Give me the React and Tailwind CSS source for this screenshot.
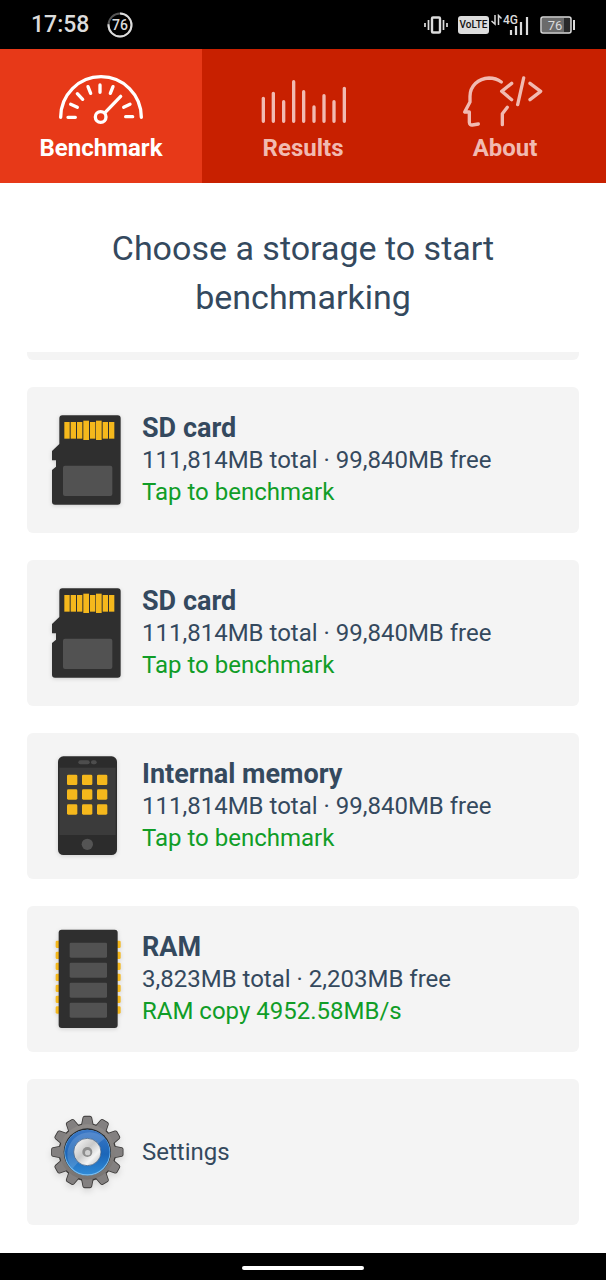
const tabs = [
  { name: 'Benchmark', icon: GaugeIcon, active: true },
  { name: 'Results', icon: BarsIcon, active: false },
  { name: 'About', icon: HeadIcon, active: false },
];

const storages = [
  { id: 'sd-1', name: 'SD card', space: '111,814MB total · 99,840MB free', action: 'Tap to benchmark', icon: SdCardIcon },
  { id: 'sd-2', name: 'SD card', space: '111,814MB total · 99,840MB free', action: 'Tap to benchmark', icon: SdCardIcon },
  { id: 'internal', name: 'Internal memory', space: '111,814MB total · 99,840MB free', action: 'Tap to benchmark', icon: PhoneIcon },
  { id: 'ram', name: 'RAM', space: '3,823MB total · 2,203MB free', action: 'RAM copy 4952.58MB/s', icon: RamIcon },
];

function GaugeIcon() {
  return (
    <svg viewBox="171 66 264 171" className="w-[88px] h-[57px]" fill="none" stroke="currentColor" strokeWidth="10" strokeLinecap="round" aria-hidden="true">
      <path d="M182 205 A121 122 0 0 1 424 205" />
      <path d="M204 205H226M212 166L232 175M232 134L248 151M264 113L272 133M300 108V130M339 113L331 133M371 175L390 166M377 203H398" />
      <path d="M362 142L315 191" />
      <circle cx="302" cy="204" r="16" />
    </svg>
  );
}

function BarsIcon() {
  return (
    <svg viewBox="171 66 264 171" className="w-[88px] h-[57px]" fill="none" stroke="currentColor" strokeWidth="10" strokeLinecap="round" aria-hidden="true">
      <path d="M184 148V217M214 133V217M245 158V217M275 98V217M305 128V217M336 174V217M366 140V217M396 158V217M427 118V217" />
    </svg>
  );
}

function HeadIcon() {
  return (
    <svg viewBox="171 66 264 171" className="w-[88px] h-[57px]" fill="none" stroke="currentColor" strokeWidth="10" strokeLinecap="round" strokeLinejoin="round" aria-hidden="true">
      <path d="M292 99C280 90 268 87 255 87C222 88 198 112 198 142V159L182 189H196V220Q197 229 205 228L223 225" />
      <path d="M310 175L295 194V227" />
      <path d="M323 103L293 127L323 152M359 87L341 167M378 103L410 127L378 152" />
    </svg>
  );
}

function SdCardIcon() {
  const pins = [133, 152, 171, 190, 210, 228, 248, 267];
  return (
    <svg viewBox="90 204 228 306" className="w-[76px] h-[102px] shrink-0 drop-shadow-sm" aria-hidden="true">
      <path d="M127 223H293Q302 223 302 232V482Q302 491 293 491H105Q96 491 96 482V387L108 377V358H96V330L118 309V232Q118 223 127 223Z" fill="#2f2f2f" />
      {pins.map((x) => {
        const tall = x === 190 || x === 228;
        return <rect key={x} x={x} y={tall ? 239 : 243} width={tall ? 17 : 16} height={tall ? 58 : 50} fill="#f5b81c" />;
      })}
      <rect x="129" y="374" width="148" height="91" rx="6" fill="#525252" />
    </svg>
  );
}

function PhoneIcon() {
  return (
    <svg viewBox="90 90 228 306" className="w-[76px] h-[102px] shrink-0 drop-shadow-sm" aria-hidden="true">
      <rect x="114" y="94" width="177" height="296" rx="16" fill="#2c2c2c" />
      <rect x="118" y="128" width="169" height="202" fill="#3b3b3b" />
      <rect x="175" y="106" width="34" height="12" rx="6" fill="#4d4d4d" />
      <rect x="213" y="106" width="17" height="12" rx="6" fill="#4d4d4d" />
      {[149, 193, 238].map((y) =>
        [141, 186, 231].map((x) => <rect key={`${x}-${y}`} x={x} y={y} width="31" height="31" rx="4" fill="#f5b81c" />)
      )}
      <circle cx="202" cy="358" r="17" fill="#545454" />
    </svg>
  );
}

function RamIcon() {
  return (
    <svg viewBox="90 85 228 306" className="w-[76px] h-[102px] shrink-0 drop-shadow-sm" aria-hidden="true">
      {[123, 156, 189, 222, 255, 288, 320].map((y) => (
        <rect key={y} x="107" y={y} width="195" height="22" rx="4" fill="#f5b81c" />
      ))}
      <rect x="116" y="90" width="177" height="295" rx="9" fill="#2f2f2f" />
      {[129, 189, 249, 309].map((y) => (
        <rect key={y} x="149" y={y} width="112" height="45" rx="4" fill="#525252" />
      ))}
    </svg>
  );
}

function GearIcon() {
  const teeth = Array.from({ length: 12 }, (_, i) => i * 30);
  const tooth = 'M124 86L130 55Q131 52 134 52H150Q153 52 154 55L160 86Z';
  return (
    <svg viewBox="30 5 228 306" className="w-[76px] h-[102px] shrink-0 drop-shadow-md" aria-hidden="true">
      <defs>
        <linearGradient id="gear-body" x1="0" y1="0" x2="0" y2="1">
          <stop offset="0" stopColor="#8f8b89" />
          <stop offset="1" stopColor="#777371" />
        </linearGradient>
        <linearGradient id="gear-blue" x1="0" y1="0" x2="0" y2="1">
          <stop offset="0" stopColor="#3c78c6" />
          <stop offset="0.55" stopColor="#1c66b8" />
          <stop offset="1" stopColor="#2f8ad6" />
        </linearGradient>
        <linearGradient id="gear-hub" x1="0" y1="0" x2="1" y2="1">
          <stop offset="0" stopColor="#ffffff" />
          <stop offset="0.45" stopColor="#c9c9c9" />
          <stop offset="0.7" stopColor="#f4f4f4" />
          <stop offset="1" stopColor="#b5b5b5" />
        </linearGradient>
      </defs>
      <g fill="#7f7b79" stroke="#3b3938" strokeWidth="5" strokeLinejoin="round">
        {teeth.map((a) => <path key={a} d={tooth} transform={`rotate(${a} 142 158)`} />)}
        <circle cx="142" cy="158" r="84" />
      </g>
      <g fill="#838080">
        {teeth.map((a) => <path key={a} d={tooth} transform={`rotate(${a} 142 158)`} />)}
      </g>
      <circle cx="142" cy="158" r="83" fill="url(#gear-body)" />
      <circle cx="142" cy="158" r="71" fill="#252a30" />
      <circle cx="142" cy="160" r="69" fill="#79bdf0" />
      <circle cx="142" cy="158" r="67" fill="url(#gear-blue)" />
      <path d="M97 208A67 67 0 0 1 195 117L142 158Z" fill="#ffffff" opacity="0.15" />
      <circle cx="142" cy="158" r="41" fill="url(#gear-hub)" stroke="#35557c" strokeWidth="2" />
      <circle cx="142" cy="158" r="15" fill="#8d8d8d" />
      <circle cx="143" cy="160" r="8" fill="#d0d0d0" />
    </svg>
  );
}

function StatusBar() {
  return (
    <header className="h-[49px] bg-black text-[#dcdcdc] flex items-center justify-between px-[31px]">
      <div className="flex items-center gap-[18px]">
        <span className="text-[23px] leading-[30px] font-medium">17:58</span>
        <svg viewBox="0 0 26 26" className="w-[26px] h-[26px]" aria-label="76">
          <circle cx="13" cy="13" r="11.5" fill="none" stroke="#555" strokeWidth="2" />
          <circle cx="13" cy="13" r="11.5" fill="none" stroke="#dcdcdc" strokeWidth="2" pathLength="100" strokeDasharray="76 24" transform="rotate(-90 13 13)" />
          <text x="13" y="18" textAnchor="middle" fontSize="14" fontWeight="500" fill="#dcdcdc">76</text>
        </svg>
      </div>
      <div className="flex items-center">
        <svg viewBox="0 0 24 18" className="w-[24px] h-[18px] mr-[10px]" fill="none" stroke="#dcdcdc" strokeWidth="2" aria-hidden="true">
          <rect x="8" y="1.5" width="8" height="15" rx="1" strokeWidth="2.4" />
          <path d="M1 7V11M4.500 4V14M19.500 4V14M23 7V11" strokeWidth="1.700" />
        </svg>
        <span className="w-[31px] h-[18px] mr-[2px] rounded-[3px] bg-[#dcdcdc] text-[#111] text-[10px] leading-[18px] font-medium text-center">VoLTE</span>
        <svg viewBox="0 0 38 22" className="w-[38px] h-[22px] mr-[11px]" fill="none" stroke="#dcdcdc" strokeWidth="1.500" aria-hidden="true">
          <path d="M4 1V10L0.500 7M7.500 11V1.500L10.500 4.500" />
          <path d="M20 16V21M25 12V21M30 8V21M36 3V21" strokeWidth="2.200" />
          <text x="12" y="10" fontSize="12" fontWeight="500" fill="#dcdcdc" stroke="none">4G</text>
        </svg>
        <svg viewBox="0 0 35 18" className="w-[35px] h-[18px]" aria-label="Battery 76">
          <rect x="1" y="1" width="30" height="16" rx="2" fill="#2a2a2a" stroke="#dcdcdc" strokeWidth="1.500" />
          <rect x="2" y="2" width="22" height="14" fill="#6b6b6b" />
          <rect x="33" y="4" width="2" height="10" fill="#dcdcdc" />
          <text x="15" y="14" textAnchor="middle" fontSize="13" fill="#dcdcdc">76</text>
        </svg>
      </div>
    </header>
  );
}

const cardClass = 'w-full min-h-[146px] flex items-center gap-4 pl-[23px] pr-4 rounded-[6px] bg-[#f4f4f4] text-left';

export default function App() {
  return (
    <div className="min-h-screen flex flex-col bg-white text-[#34495e] font-[Roboto,sans-serif]">
      <StatusBar />

      <nav className="grid grid-cols-3 bg-[#c82000]">
        {tabs.map(({ name, icon: Icon, active }) => (
          <button
            key={name}
            type="button"
            aria-current={active ? 'page' : undefined}
            className={`h-[134px] pt-[22px] flex flex-col items-center text-[24px] leading-[28px] font-bold ${
              active ? 'bg-[#e73918] text-white' : 'text-[#f1bab1]'
            }`}
          >
            <Icon />
            <span className="mt-[6px]">{name}</span>
          </button>
        ))}
      </nav>

      <main className="grow">
        <h1 className="h-[169px] pt-[41px] px-16 text-center text-[34px] leading-[49px]">
          Choose a storage to start benchmarking
        </h1>

        <div className="px-[27px] pb-[27px] flex flex-col gap-[27px]">
          {/* bottom edge of the card that is scrolled out */}
          <div className="h-[8px] rounded-b-[6px] bg-[#f4f4f4]" />

          {storages.map(({ id, name, space, action, icon: Icon }) => (
            <button key={id} type="button" className={cardClass}>
              <Icon />
              <span className="flex flex-col text-[24px] leading-[32px]">
                <span className="text-[27px] font-bold">{name}</span>
                <span>{space}</span>
                <span className="text-[#109d27]">{action}</span>
              </span>
            </button>
          ))}

          <button type="button" className={cardClass}>
            <GearIcon />
            <span className="text-[24px] leading-[32px]">Settings</span>
          </button>
        </div>
      </main>

      <footer className="h-[27px] bg-black flex items-center justify-center pt-[3px]">
        <div className="w-1/5 h-[4px] rounded-full bg-white" />
      </footer>
    </div>
  );
}
